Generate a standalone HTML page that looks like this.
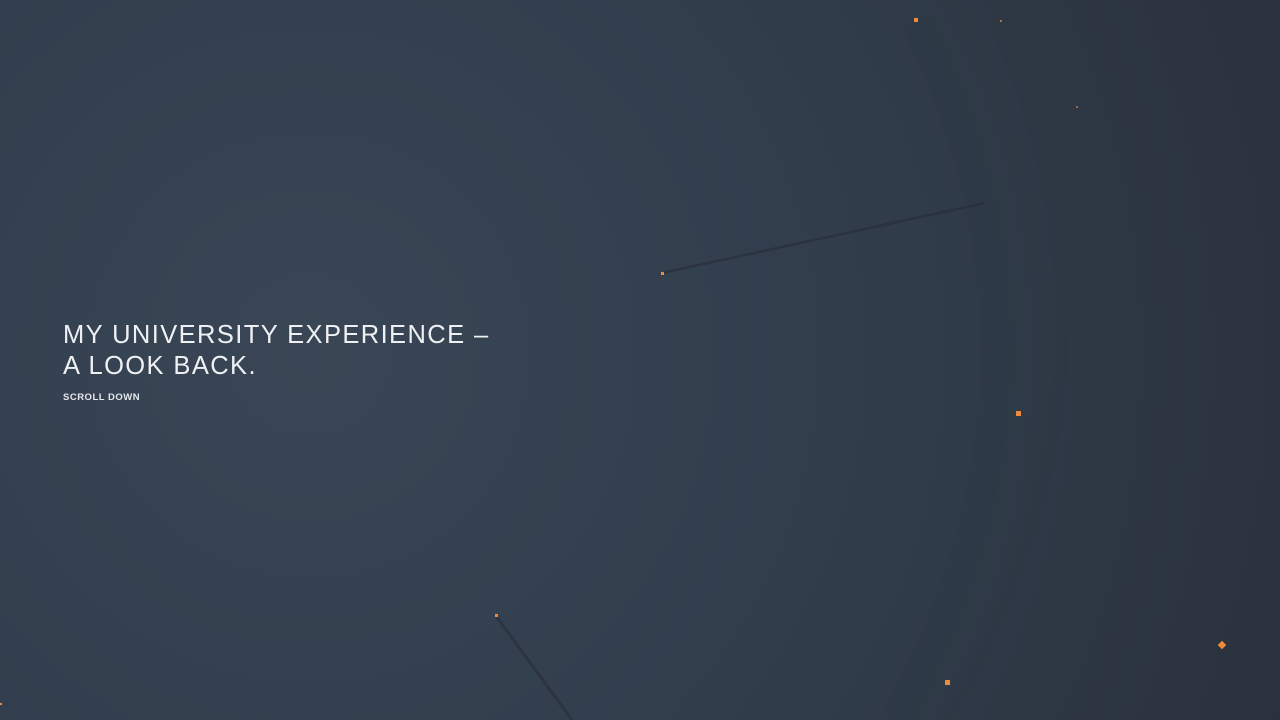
<!DOCTYPE html>
<html><head><meta charset="utf-8"><style>
html,body{margin:0;width:1280px;height:720px;overflow:hidden}
body{background:radial-gradient(circle at 310px 355px,#3a4655 0px,#354251 250px,#303b49 650px,#2a313c 1050px);position:relative;font-family:"Liberation Sans",sans-serif}
h1{position:absolute;left:63px;top:320px;margin:0;font-weight:300;font-size:25.5px;line-height:31px;letter-spacing:1.4px;color:#eef0f3}
.s{position:absolute;left:63px;top:392px;font-size:9.5px;letter-spacing:0.5px;color:#e6e8ec;font-weight:bold}
.d{position:absolute;background:#f08a3c}
</style></head><body>
<svg width="1280" height="720" style="position:absolute;left:0;top:0">
<path d="M915 20 Q1085 370 895 720" stroke="#2e3541" stroke-width="30" fill="none" opacity="0.18"/>
<path d="M995 20 Q1150 370 945 720" stroke="#2b3340" stroke-width="14" fill="none" opacity="0.15"/>
<line x1="662" y1="273" x2="985" y2="203" stroke="#262d37" stroke-width="2.5" opacity="0.6"/>
<line x1="496" y1="616" x2="572" y2="720" stroke="#262d37" stroke-width="3" opacity="0.6"/>
</svg>
<h1>MY UNIVERSITY EXPERIENCE –<br>A LOOK BACK.</h1>
<div class="s">SCROLL DOWN</div>
<div class="d" style="left:914px;top:18px;width:4px;height:4px"></div>
<div class="d" style="left:1000px;top:20px;width:2px;height:2px;opacity:.7"></div>
<div class="d" style="left:1076px;top:106px;width:2px;height:2px;opacity:.6"></div>
<div class="d" style="left:661px;top:272px;width:3px;height:3px"></div>
<div class="d" style="left:1016px;top:411px;width:5px;height:5px"></div>
<div class="d" style="left:495px;top:614px;width:3px;height:3px"></div>
<div class="d" style="left:1219px;top:642px;width:6px;height:6px;transform:rotate(45deg)"></div>
<div class="d" style="left:945px;top:680px;width:5px;height:5px"></div>
<div class="d" style="left:0px;top:703px;width:2px;height:2px"></div>
</body></html>
